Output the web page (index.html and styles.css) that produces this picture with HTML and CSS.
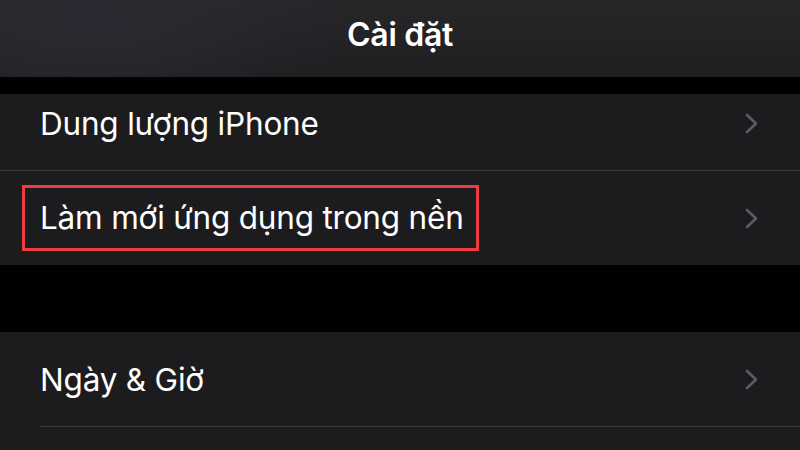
FILE: index.html
```html
<!DOCTYPE html>
<html lang="vi">
<head>
<meta charset="utf-8">
<link rel="stylesheet" href="styles.css">
</head>
<body>
<header class="nav">
  <h1 class="nav-title">Cài đặt</h1>
</header>
<section class="group group-top">
  <div class="row row-first">
    <span class="label">Dung lượng iPhone</span>
    <svg class="chev" viewBox="0 0 13 21"><path d="M2 2 L11 10.5 L2 19"/></svg>
  </div>
  <div class="row">
    <span class="label label-marked">Làm mới ứng dụng trong nền</span>
    <svg class="chev" viewBox="0 0 13 21"><path d="M2 2 L11 10.5 L2 19"/></svg>
  </div>
</section>
<section class="group group-bottom">
  <div class="row">
    <span class="label">Ngày &amp; Giờ</span>
    <svg class="chev" viewBox="0 0 13 21"><path d="M2 2 L11 10.5 L2 19"/></svg>
  </div>
  <div class="row row-partial"></div>
</section>
</body>
</html>
```
FILE: styles.css
```css
html, body {
  margin: 0;
  padding: 0;
  background: #000;
  width: 800px;
  height: 450px;
  overflow: hidden;
  font-family: Inter, "Noto Sans", "Liberation Sans", sans-serif;
  color: #fff;
}
.nav {
  height: 77px;
  background: radial-gradient(ellipse 260px 120px at 90px 20px, #2a2a32 0%, rgba(40,40,46,0) 100%),
              linear-gradient(#27272a, #1f1f21);
  display: flex;
  align-items: center;
  justify-content: center;
}
.nav-title {
  margin: 0;
  font-size: 32px;
  font-weight: 600;
  letter-spacing: -0.3px;
  padding-bottom: 8px;
}
.group {
  background: #1c1c1e;
}
.group-top {
  margin-top: 17px;
}
.group-bottom {
  margin-top: 67px;
}
.row {
  height: 95px;
  box-sizing: border-box;
  display: flex;
  align-items: center;
  justify-content: space-between;
  padding: 0 40px 0 40px;
}
.row + .row {
  border-top: 1px solid #38383a;
}
.row-first {
  height: 76px;
  padding-bottom: 18px;
}
.group-bottom .row {
  height: 94px;
}
.group-bottom .row-partial {
  height: 30px;
  margin-left: 40px;
  padding: 0;
}
.label {
  font-size: 31.5px;
  font-weight: 400;
  letter-spacing: -0.2px;
}
.label-marked {
  outline: 3px solid #ee3b3b;
  margin-left: -15px;
  padding: 10px 12px 11px 15px;
}
.chev {
  width: 13px;
  height: 21px;
  margin-right: 2px;
  fill: none;
  stroke: #5c5c60;
  stroke-width: 2.6;
  stroke-linecap: round;
  stroke-linejoin: round;
}
```
